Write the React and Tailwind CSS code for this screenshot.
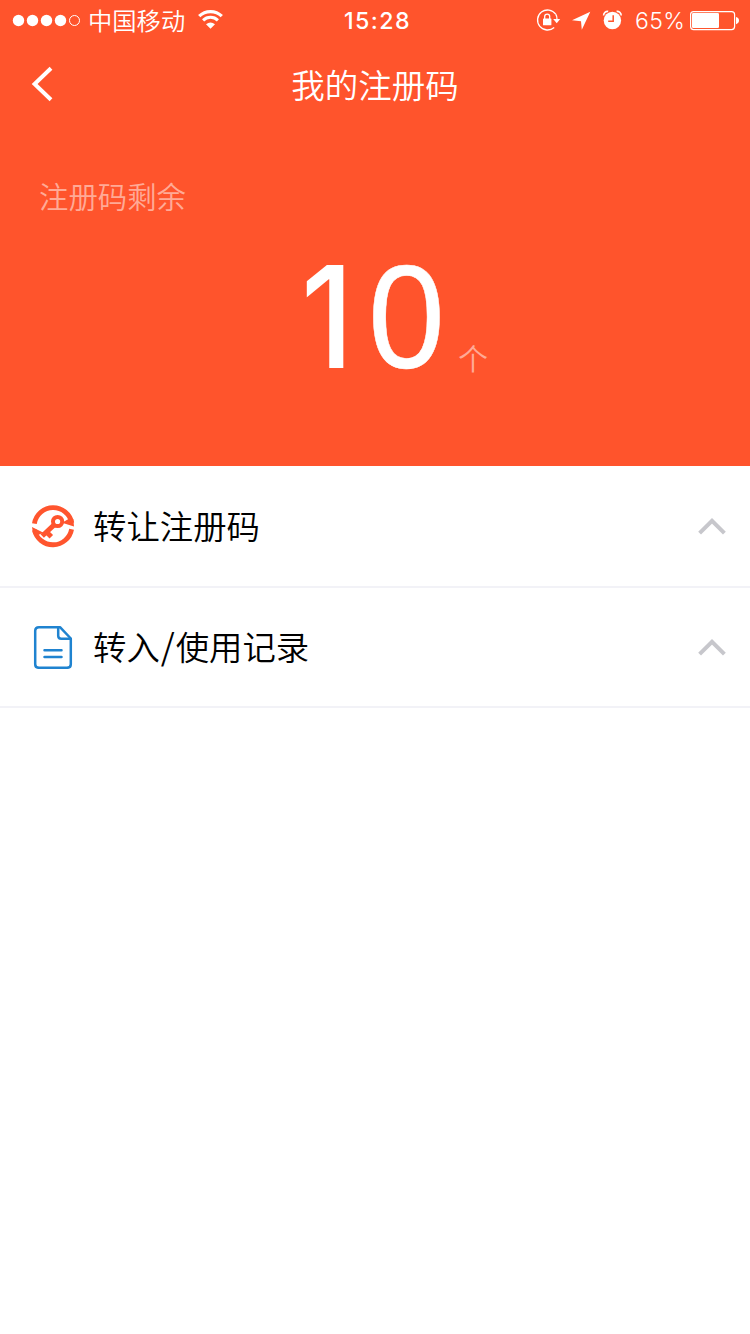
import React from "react";

const cjk = "font-['Noto_Sans_CJK_SC',sans-serif]";

function StatusBar() {
  return (
    <div className="flex h-10 items-center text-white">
      <svg className="ml-3 block" width="70" height="40" viewBox="12 0 70 40" fill="#fff">
        <circle cx="18.5" cy="20.5" r="5.7" />
        <circle cx="32.5" cy="20.5" r="5.7" />
        <circle cx="46.5" cy="20.5" r="5.7" />
        <circle cx="60.5" cy="20.5" r="5.7" />
        <circle cx="74.5" cy="20.5" r="5" fill="none" stroke="#fff" strokeWidth="1" />
      </svg>
      <span className="ml-[6px] w-[98px] whitespace-nowrap font-['Noto_Sans_CJK_SC',sans-serif] text-[24.3px] font-[350] leading-10">中国移动</span>
      <svg className="ml-[11px] block" width="26" height="40" viewBox="197 0 26 40" fill="none" stroke="#fff">
        <path d="M199.2 16.2a16 16 0 0 1 22.6 0" strokeWidth="3.2" />
        <path d="M203.1 20.4a10.5 10.5 0 0 1 14.8 0" strokeWidth="3" />
        <path d="M206 24.2Q210.5 20.8 215 24.2L210.5 28.8Z" fill="#fff" stroke="none" />
      </svg>
      <span className="ml-[121px] w-[69px] whitespace-nowrap pt-[2px] font-['Inter',sans-serif] text-[23.2px] font-medium leading-10 tracking-[1.4px]">15:28</span>
      <svg className="ml-[122px] block" width="90" height="40" viewBox="535 0 90 40" fill="#fff">
        <path d="M555.7 14.2A10 10 0 1 0 554.2 27.5" fill="none" stroke="#fff" strokeWidth="1.3" />
        <path d="M555.7 14.2Q557.2 16.5 557 19.5" fill="none" stroke="#fff" strokeWidth="1.3" />
        <path d="M553.2 19h7l-3.5 4.2Z" />
        <rect x="543" y="18.5" width="8.4" height="6.8" rx=".6" />
        <path d="M544.7 19v-2.4a2.5 2.5 0 0 1 5 0V19" fill="none" stroke="#fff" strokeWidth="1.3" />
        <path d="M590.3 11.8 581.8 29.8 581 21.2 572 20.3Z" />
        <circle cx="612.4" cy="20.5" r="8.7" />
        <path d="M603.6 15.5a4 4 0 0 1 4.6-4.1M616.6 11.4a4 4 0 0 1 4.6 4.1" fill="none" stroke="#fff" strokeWidth="1.6" />
        <path d="M613.2 15.2v6h-5" fill="none" stroke="#ff542c" strokeWidth="1.5" />
      </svg>
      <span className="ml-[10px] w-[51px] whitespace-nowrap pt-[2px] font-['Inter',sans-serif] text-[23px] font-light leading-10 tracking-[0.4px]">65%</span>
      <svg className="ml-[3px] block" width="50" height="40" viewBox="689 0 50 40">
        <rect x="690.6" y="11.6" width="44" height="18" rx="3" fill="none" stroke="#fff" strokeWidth="1.2" />
        <rect x="692" y="13" width="27" height="15" rx="1.2" fill="#fff" />
        <path d="M736 17q3 .8 3 3.6t-3 3.6Z" fill="#fff" />
      </svg>
    </div>
  );
}

function TransferIcon() {
  return (
    <svg className="-mt-px block" width="44" height="44" viewBox="31 503 44 44" fill="#ff552e">
      <path d="M34.4 522.6A19 19 0 0 1 71.8 522" fill="none" stroke="#ff552e" strokeWidth="4.8" />
      <path d="M34.4 529A19 19 0 0 0 71.6 528.2" fill="none" stroke="#ff552e" strokeWidth="4.8" />
      <path d="M74 525.4 62 521.8 68.5 518 73.3 518Z" />
      <path d="M32 526 43.5 531.8 38 534 33 532Z" />
      <circle cx="57.6" cy="520.5" r="4.6" fill="none" stroke="#ff552e" strokeWidth="4" />
      <path d="M54.4 523.6 42.2 535M46.5 531l4.8 4.8" fill="none" stroke="#ff552e" strokeWidth="5" />
    </svg>
  );
}

function RecordIcon() {
  return (
    <svg className="block" width="44" height="44" viewBox="31 625 44 44" fill="none" stroke="#1f83d0" strokeWidth="2.5" strokeLinejoin="round" strokeLinecap="round">
      <path d="M59 627.2H39Q35.2 627.2 35.2 631v33.2q0 3.6 3.8 3.6h28q3.8 0 3.8-3.6V638.5L60 627.2Z" />
      <path d="M58.2 627.5v8.2q0 3 3 3h9.2M44.5 650.2H61.5M44.5 657H61.5" />
    </svg>
  );
}

function Row({ icon, label, size }) {
  return (
    <div className={`${size} flex items-center border-b-2 border-[#f2f2f7] pl-[31px] pr-6`}>
      {icon}
      <span className={`${cjk} -mt-[3px] ml-[18px] flex-1 text-[33.4px] font-[350] leading-[48px] text-black`}>{label}</span>
      <svg className="block" width="28" height="18" viewBox="0 0 28 18" fill="none" stroke="#c7c7cc" strokeWidth="4">
        <path d="M1.6 16.2 14 3.8 26.4 16.2" />
      </svg>
    </div>
  );
}

export default function App() {
  return (
    <div className="flex min-h-[1334px] w-[750px] flex-col bg-white">
      <header className="flex h-[466px] flex-col bg-[#ff542c]">
        <StatusBar />
        <div className="grid h-[88px] grid-cols-[80px_1fr_80px] items-center">
          <svg className="ml-[30px] block" width="24" height="38" viewBox="30 65 24 38" fill="none" stroke="#fff" strokeWidth="4">
            <path d="M51 68.3 34.6 84 51 99.7" />
          </svg>
          <h1 className={`${cjk} -mt-px text-center text-[33.5px] font-[350] leading-[48px] text-white`}>我的注册码</h1>
        </div>
        <p className={`${cjk} ml-[39px] mt-[45px] text-[29.4px] font-[350] leading-[44px] text-[#ffaa96]`}>注册码剩余</p>
        <div className="mt-[19px] flex h-[160px] items-baseline pl-[301px] text-white">
          <span className="w-[67px] origin-left scale-x-[0.89] font-['Inter',sans-serif] text-[142px] font-medium leading-[160px]">1</span>
          <span className="w-[80px] origin-left scale-x-[0.94] font-['Liberation_Sans',sans-serif] text-[147px] leading-[160px] [-webkit-text-stroke:0.5px_white]">0</span>
          <span className={`${cjk} ml-[10px] pt-[2px] text-[30px] font-[350] leading-[40px] text-[#ffaa96]`}><span className="relative top-[2px]">个</span></span>
        </div>
      </header>
      <main>
        <Row size="h-[122px]" icon={<TransferIcon />} label="转让注册码" />
        <Row size="h-[120px]" icon={<RecordIcon />} label={<>转入<span className="mx-px text-[35.5px]">/</span>使用记录</>} />
      </main>
    </div>
  );
}
